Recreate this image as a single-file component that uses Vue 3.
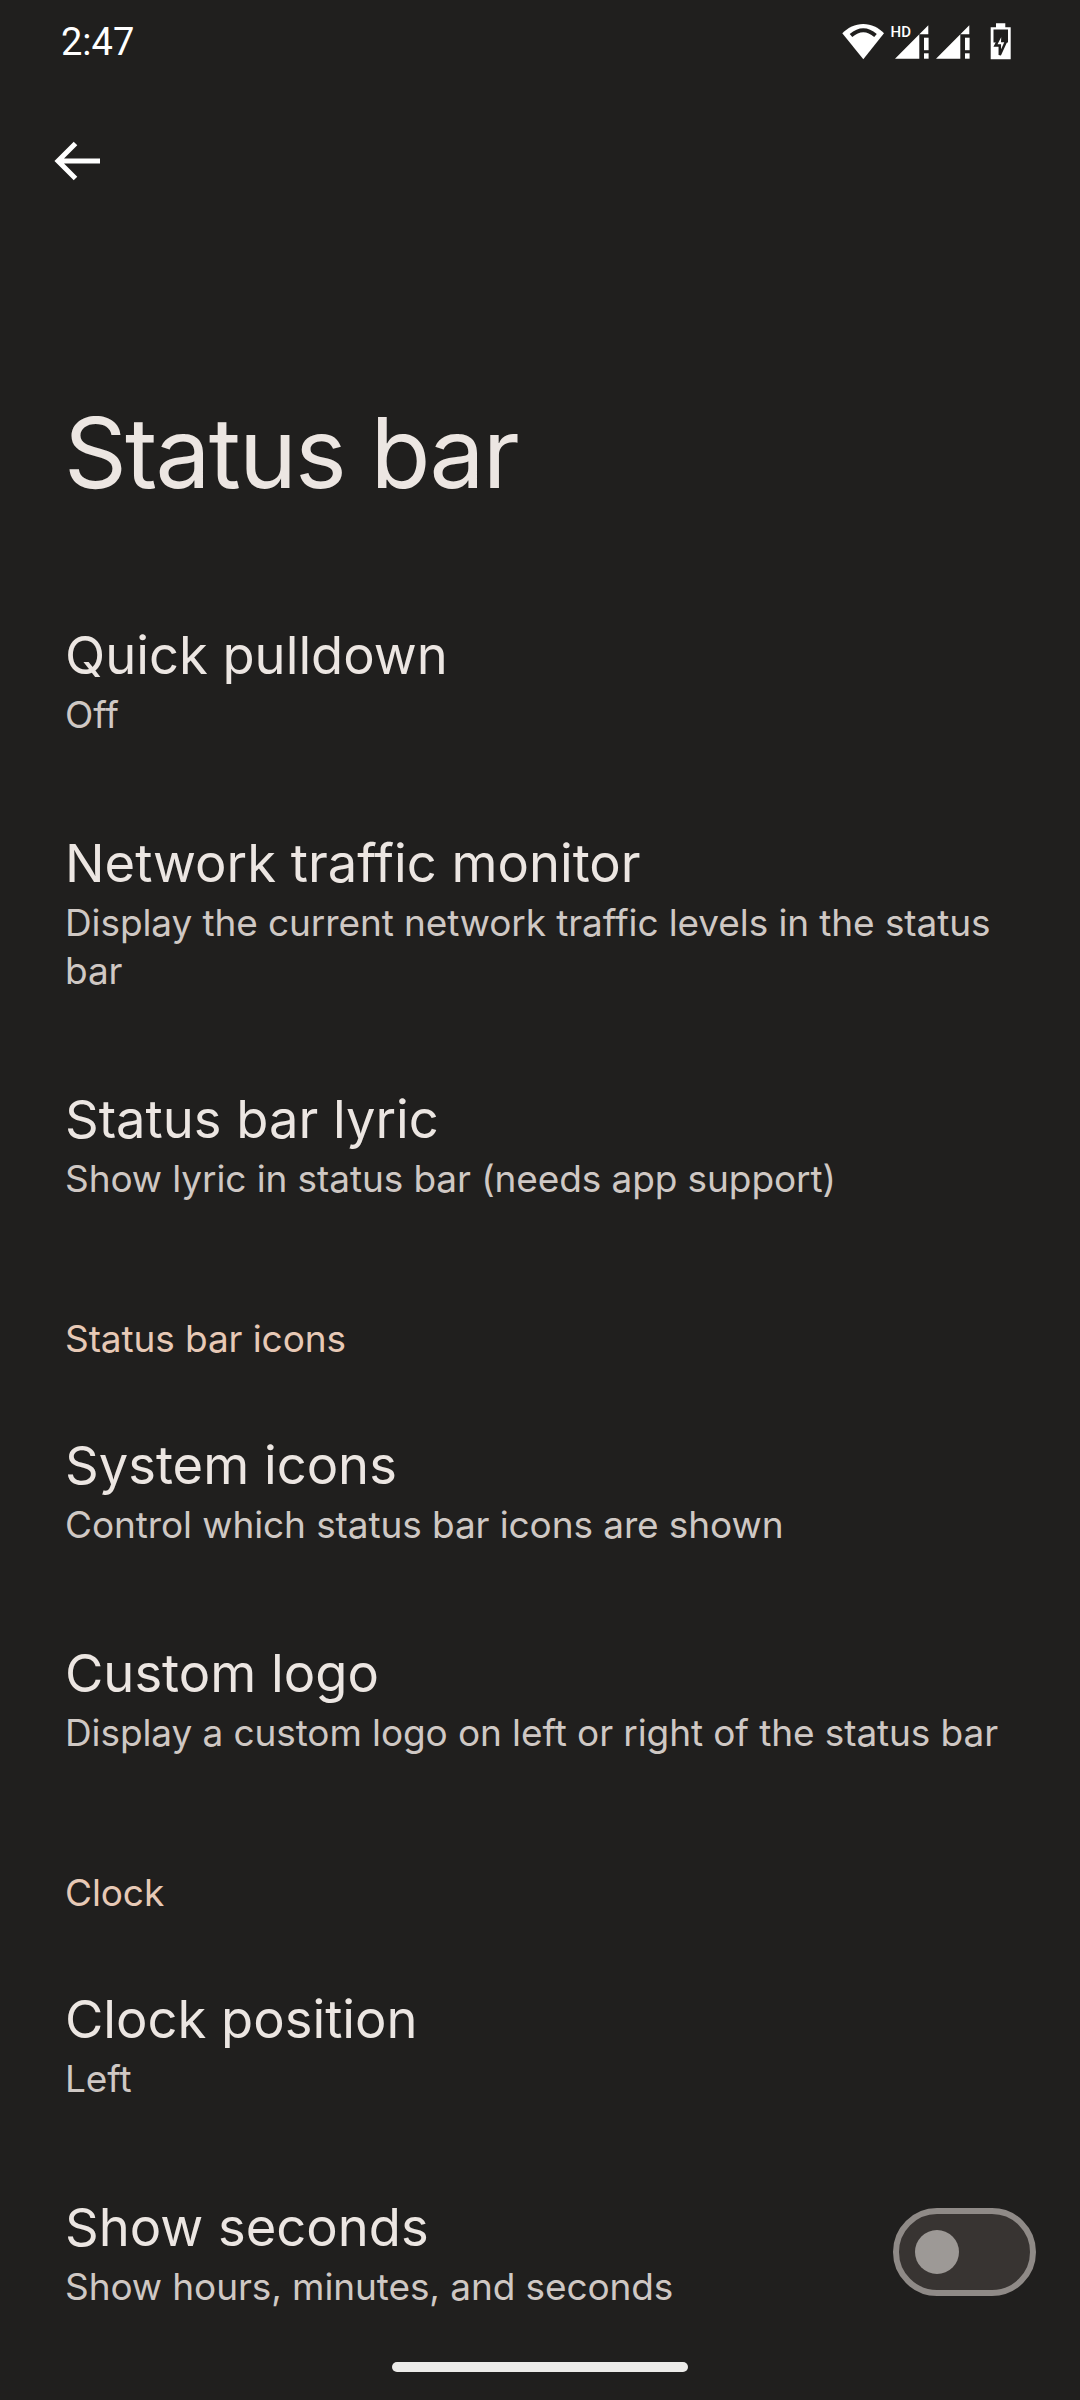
<template>
  <div class="screen">
    <div class="status">
      <span class="time">2:47</span>
      <svg class="status-icons" viewBox="0 0 180 44" width="180" height="44">
        <path fill="#fff" d="M2.3 13.3C8 7.5 15 4 23.2 4S38.500 7.500 44 13.300L23.300 39.300Z" />
        <path fill="none" stroke="#201f1e" stroke-width="4" d="M11 15.500Q23.300 5 35.500 15.500" />
        <text x="50.500" y="16.800" class="hd">HD</text>
        <g fill="#fff">
          <path d="M55 38.700L88.300 5.300V14.300H79.300V38.700Z" />
          <rect x="84" y="17.700" width="4.600" height="12.500" />
          <rect x="84" y="33.300" width="4.600" height="5.400" />
          <path d="M96 38.700L129.300 5.300V14.300H120.300V38.700Z" />
          <rect x="125" y="17.700" width="4.600" height="12.500" />
          <rect x="125" y="33.300" width="4.600" height="5.400" />
          <path d="M156 3.300H165.300V7.300H170.700V39.300H150.700V7.300H156Z" />
        </g>
        <rect x="153.500" y="9.500" width="14.500" height="13" fill="#201f1e" />
        <path fill="#fff" stroke="#201f1e" stroke-width="2.500" d="M162.800 11.500L155.500 25.500H159.800V35L166.200 21H162.300Z" />
      </svg>
    </div>

    <div class="toolbar">
      <svg viewBox="0 0 48 48" width="48" height="48">
        <path fill="none" stroke="#fff" stroke-width="5" d="M47 21H5M22.500 3.500L5 21L22.500 38.500" />
      </svg>
    </div>

    <h1 class="title">Status bar</h1>

    <template v-for="item in items" :key="item.title || item.header">
      <div v-if="item.header" class="section">{{ item.header }}</div>
      <div v-else class="row">
        <div class="row-text">
          <div class="row-title">{{ item.title }}</div>
          <div class="row-sub">{{ item.sub }}</div>
        </div>
        <div v-if="item.toggle" class="toggle"><span class="thumb"></span></div>
      </div>
    </template>

    <div class="nav-pill"></div>
  </div>
</template>

<script setup>
const items = [
  { title: 'Quick pulldown', sub: 'Off' },
  { title: 'Network traffic monitor', sub: 'Display the current network traffic levels in the status bar' },
  { title: 'Status bar lyric', sub: 'Show lyric in status bar (needs app support)' },
  { header: 'Status bar icons' },
  { title: 'System icons', sub: 'Control which status bar icons are shown' },
  { title: 'Custom logo', sub: 'Display a custom logo on left or right of the status bar' },
  { header: 'Clock' },
  { title: 'Clock position', sub: 'Left' },
  { title: 'Show seconds', sub: 'Show hours, minutes, and seconds', toggle: true },
]
</script>

<style>
body {
  margin: 0;
  background: #201f1e;
}
</style>

<style scoped>
.screen {
  position: relative;
  width: 1080px;
  height: 2400px;
  overflow: hidden;
  background: #201f1e;
  color: #ece6e2;
  font-family: Inter, 'Noto Sans', sans-serif;
}
.status {
  height: 84px;
  padding: 0 60px 0 61px;
  display: flex;
  align-items: center;
  justify-content: space-between;
  box-sizing: border-box;
}
.time {
  font-family: Roboto, sans-serif;
  font-size: 38px;
  color: #fff;
}
.status-icons {
  display: block;
}
.hd {
  font-family: Roboto, sans-serif;
  font-size: 15px;
  font-weight: 500;
  fill: #fff;
}
.toolbar {
  height: 154px;
  padding: 56px 0 0 53px;
  box-sizing: border-box;
}
.toolbar svg {
  display: block;
}
.title {
  margin: 0;
  height: 337px;
  padding: 150px 0 0 64px;
  box-sizing: border-box;
  font-size: 98px;
  line-height: 130px;
  font-weight: 400;
  letter-spacing: -1.9px;
}
.row {
  display: flex;
  align-items: center;
  padding: 45px 44px 44px 65px;
}
.row-text {
  flex: 1;
  min-width: 0;
}
.row-title {
  font-size: 52.500px;
  line-height: 71px;
}
.row-sub {
  font-size: 37px;
  line-height: 48px;
  letter-spacing: -0.1px;
  color: #cfc8c4;
}
.section {
  padding: 68px 65px 22px;
  font-size: 37px;
  line-height: 48px;
  letter-spacing: -0.1px;
  color: #e7c9b6;
}
.toggle {
  width: 143px;
  height: 88px;
  flex: none;
  box-sizing: border-box;
  border: 6px solid #8f8a87;
  border-radius: 44px;
  background: #383432;
  display: flex;
  align-items: center;
  padding-left: 16px;
}
.thumb {
  width: 44px;
  height: 44px;
  border-radius: 50%;
  background: #9d9996;
}
.nav-pill {
  position: absolute;
  left: 392px;
  top: 2362px;
  width: 296px;
  height: 10px;
  border-radius: 5px;
  background: #ecebe9;
}
</style>
